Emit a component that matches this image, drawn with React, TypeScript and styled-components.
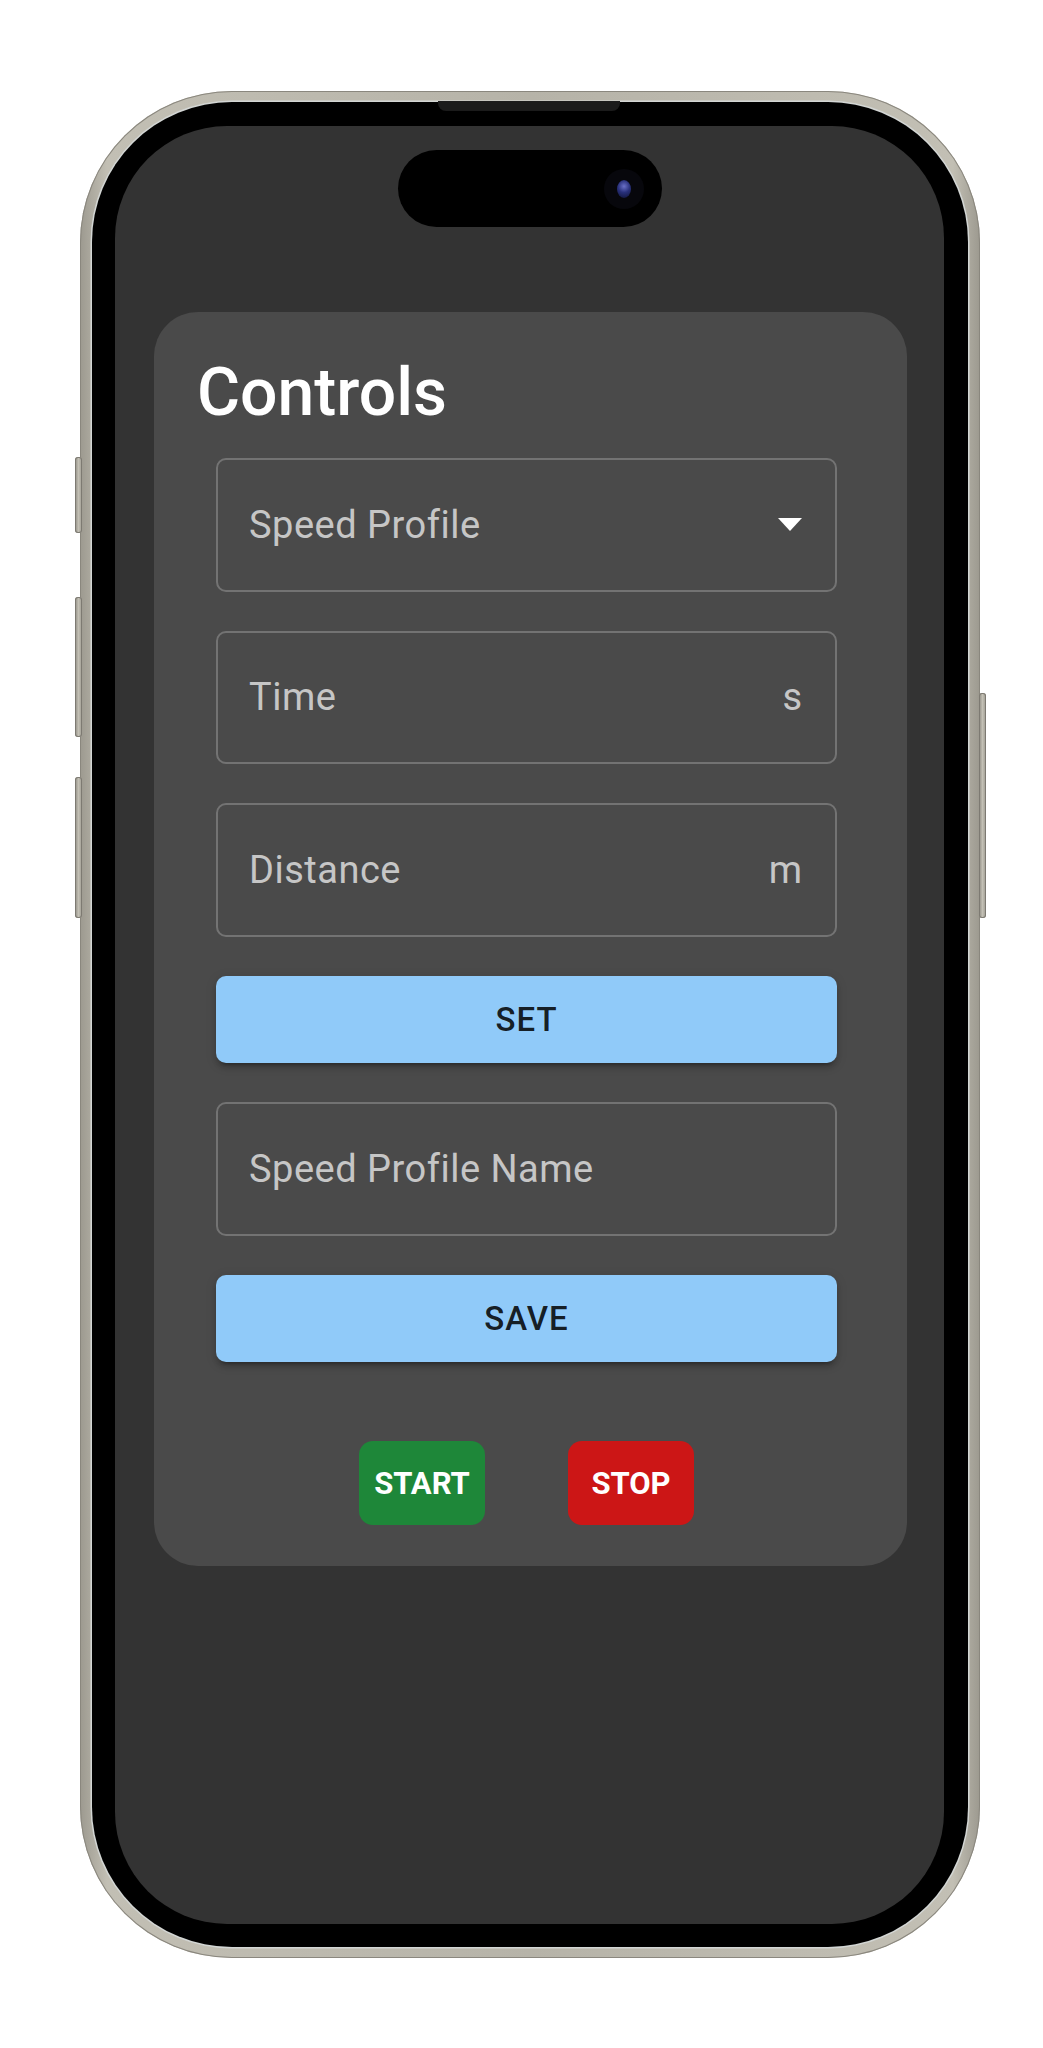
import styled, { createGlobalStyle } from 'styled-components';

const GlobalStyle = createGlobalStyle`
  html, body {
    margin: 0;
    padding: 0;
    background: #ffffff;
  }
  * {
    box-sizing: border-box;
  }
  body {
    font-family: Roboto, 'Noto Sans', 'Liberation Sans', sans-serif;
  }
`;

const Page = styled.div`
  padding: 91px 0 0 80px;
  min-height: 2048px;
`;

const Phone = styled.div`
  position: relative;
  width: 900px;
  height: 1867px;
  padding: 11px 12px;
  border-radius: 152px;
  background: linear-gradient(90deg, #9c998f 0%, #c2bfb4 3%, #b6b3a8 50%, #c2bfb4 97%, #9c998f 100%);
  box-shadow: inset 0 0 0 1px #8a877e;
`;

const SideButton = styled.div<{ $side: 'left' | 'right'; $top: number; $height: number }>`
  position: absolute;
  top: ${(p) => p.$top}px;
  height: ${(p) => p.$height}px;
  width: 7px;
  ${(p) => (p.$side === 'left' ? 'left: -5px;' : 'right: -6px;')}
  border-radius: 3px;
  background: linear-gradient(90deg, #8e8b82, #c3c0b5 50%, #9d9a90);
  box-shadow: inset 0 0 0 1px #7d7a72;
`;

const Bezel = styled.div`
  position: relative;
  height: 100%;
  padding: 24px 24px 23px 23px;
  border-radius: 140px;
  background: #000000;
  box-shadow: 0 0 0 1.5px #d3d6d4;
`;

const Speaker = styled.div`
  position: absolute;
  top: -1px;
  left: 346px;
  width: 182px;
  height: 10px;
  border-radius: 0 0 8px 8px;
  background: #1b1b1b;
`;

const Screen = styled.div`
  height: 100%;
  border-radius: 112px;
  background: #333333;
  padding-top: 24px;
  display: flex;
  flex-direction: column;
  overflow: hidden;
`;

const Island = styled.div`
  align-self: center;
  width: 264px;
  height: 77px;
  border-radius: 39px;
  background: #000000;
  display: flex;
  align-items: center;
  justify-content: flex-end;
  padding-right: 18px;
`;

const Camera = styled.div`
  width: 40px;
  height: 40px;
  border-radius: 50%;
  background: #07070c;
  display: flex;
  align-items: center;
  justify-content: center;
`;

const Lens = styled.div`
  width: 14px;
  height: 18px;
  border-radius: 50%;
  background: radial-gradient(circle at 50% 35%, #6a70c8 0%, #28307a 45%, #0e1233 100%);
`;

const Card = styled.section`
  margin: 85px 0 0 39px;
  width: 753px;
  padding: 41px 70px 41px 43px;
  border-radius: 44px;
  background: #4a4a4a;
  display: flex;
  flex-direction: column;
`;

const Title = styled.h1`
  margin: 0 0 25px;
  font-size: 66px;
  line-height: 80px;
  font-weight: 500;
  color: #ffffff;
`;

const Form = styled.div`
  margin-left: 19px;
  display: flex;
  flex-direction: column;
  gap: 39px;
`;

const Field = styled.div`
  height: 133.5px;
  border: 2px solid rgba(255, 255, 255, 0.23);
  border-radius: 10px;
  padding: 0 33px 0 31px;
  display: flex;
  align-items: center;
  justify-content: space-between;
  font-size: 38px;
  color: rgba(255, 255, 255, 0.7);
`;

const FieldLabel = styled.span`
  letter-spacing: 0.5px;
`;

const Unit = styled.span`
  color: rgba(255, 255, 255, 0.7);
`;

const WideButton = styled.button`
  height: 87.5px;
  border: none;
  border-radius: 10px;
  background: #90caf9;
  color: rgba(0, 0, 0, 0.87);
  font-family: inherit;
  font-size: 33px;
  font-weight: 500;
  letter-spacing: 0.95px;
  text-transform: uppercase;
  box-shadow: 0 7px 2.4px -5px rgba(0, 0, 0, 0.2), 0 5px 5px 0 rgba(0, 0, 0, 0.14),
    0 2.4px 12px 0 rgba(0, 0, 0, 0.12);
  cursor: pointer;
`;

const ActionRow = styled.div`
  margin-top: 40px;
  display: flex;
  justify-content: center;
  gap: 83px;
`;

const ActionButton = styled.button<{ $color: string }>`
  width: 126px;
  height: 84px;
  border: none;
  border-radius: 14px;
  background: ${(p) => p.$color};
  color: #ffffff;
  font-family: inherit;
  font-size: 31px;
  font-weight: 700;
  cursor: pointer;
`;

function DropArrow() {
  return (
    <svg width='24' height='13' viewBox='0 0 24 13' aria-hidden='true'>
      <path d='M0 0 L24 0 L12 13 Z' fill='#ffffff' />
    </svg>
  );
}

export default function App() {
  return (
    <Page>
      <GlobalStyle />
      <Phone>
        <SideButton $side='left' $top={366} $height={76} />
        <SideButton $side='left' $top={506} $height={140} />
        <SideButton $side='left' $top={686} $height={141} />
        <SideButton $side='right' $top={602} $height={225} />
        <Bezel>
          <Speaker />
          <Screen>
            <Island>
              <Camera>
                <Lens />
              </Camera>
            </Island>

            <Card>
              <Title>Controls</Title>
              <Form>
                <Field>
                  <FieldLabel>Speed Profile</FieldLabel>
                  <DropArrow />
                </Field>
                <Field>
                  <FieldLabel>Time</FieldLabel>
                  <Unit>s</Unit>
                </Field>
                <Field>
                  <FieldLabel>Distance</FieldLabel>
                  <Unit>m</Unit>
                </Field>
                <WideButton>Set</WideButton>
                <Field>
                  <FieldLabel>Speed Profile Name</FieldLabel>
                </Field>
                <WideButton>Save</WideButton>
                <ActionRow>
                  <ActionButton $color='#1e8739'>START</ActionButton>
                  <ActionButton $color='#cc1616'>STOP</ActionButton>
                </ActionRow>
              </Form>
            </Card>
          </Screen>
        </Bezel>
      </Phone>
    </Page>
  );
}
